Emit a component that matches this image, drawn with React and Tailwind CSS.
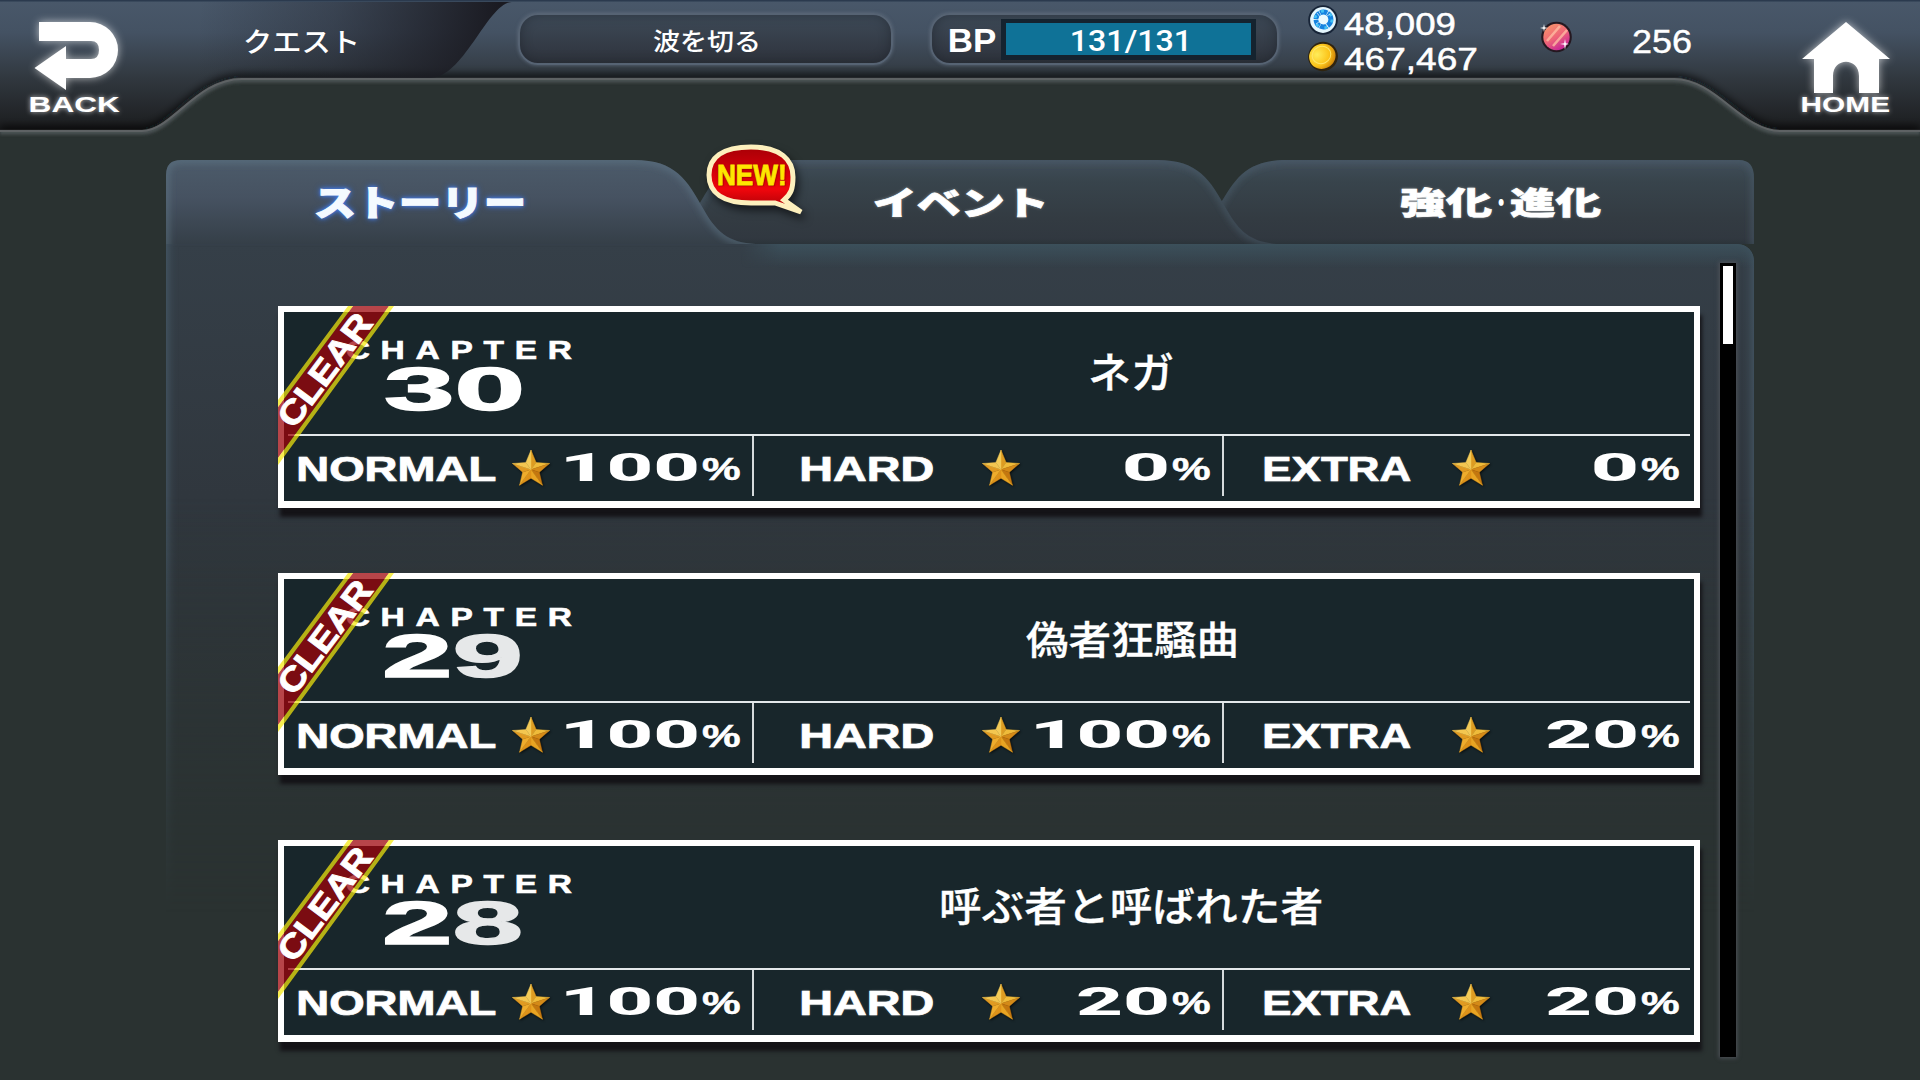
import { useLayoutEffect, useRef, useState } from "react";

const chapters = [
  { no: "30", title: "ネガ", titleBox: "w-[83px] h-[39px]", dim: "text-white", normal: "100", hard: "0", extra: "0" },
  { no: "29", title: "偽者狂騒曲", titleBox: "w-[210px] h-[39px]", dim: "text-[#e6e8e9]", normal: "100", hard: "100", extra: "20" },
  { no: "28", title: "呼ぶ者と呼ばれた者", titleBox: "w-[380px] h-[39px]", dim: "text-[#e6e8e9]", normal: "100", hard: "20", extra: "20" },
];

const digitWidth = { 1: "w-[43px]", 2: "w-[89px]", 3: "w-[131px]" };

const JP = "font-['Noto_Sans_CJK_JP',sans-serif]";
const SANS = "font-['Liberation_Sans',sans-serif]";
const ROBOTO = "font-['Roboto',sans-serif]";

// Stretches a line of text so its ink fills the box given by className
function FitText({ className = "", textClass = "", children }) {
  const box = useRef(null);
  const text = useRef(null);
  const [transform, setTransform] = useState("none");

  useLayoutEffect(() => {
    const style = getComputedStyle(text.current);
    const ctx = document.createElement("canvas").getContext("2d");
    ctx.font = style.font;
    if (style.letterSpacing !== "normal") ctx.letterSpacing = style.letterSpacing;
    const m = ctx.measureText(text.current.textContent);
    const spacing = parseFloat(style.letterSpacing) || 0;
    const size = parseFloat(style.fontSize);
    const asc = m.fontBoundingBoxAscent;
    const desc = m.fontBoundingBoxDescent;
    const baseline = (size - asc - desc) / 2 + asc;
    const left = -m.actualBoundingBoxLeft;
    const w = m.actualBoundingBoxRight + m.actualBoundingBoxLeft - (spacing > 0 && m.actualBoundingBoxRight >= m.width ? spacing : 0);
    const h = m.actualBoundingBoxAscent + m.actualBoundingBoxDescent;
    const sx = box.current.offsetWidth / w;
    const sy = box.current.offsetHeight / h;
    setTransform(`scale(${sx}, ${sy}) translate(${-left}px, ${-(baseline - m.actualBoundingBoxAscent)}px)`);
  }, []);

  return (
    <span ref={box} className={`block shrink-0 ${className}`}>
      <span ref={text} className={`block w-max whitespace-nowrap leading-none origin-top-left ${textClass}`} style={{ transform }}>
        {children}
      </span>
    </span>
  );
}

function HeaderBackdrop() {
  const edge = "M0,130 H142 C172,130 196,78 242,78 H1674 C1716,78 1742,130 1780,130 H1920";
  return (
    <svg className="absolute inset-0" width="1920" height="140" viewBox="0 0 1920 140" fill="none">
      <defs>
        <linearGradient id="bar" x1="0" y1="0" x2="0" y2="130" gradientUnits="userSpaceOnUse">
          <stop offset="0" stopColor="#49586a" />
          <stop offset=".25" stopColor="#445263" />
          <stop offset=".6" stopColor="#31383f" />
          <stop offset="1" stopColor="#1b1c1e" />
        </linearGradient>
        <linearGradient id="nameTab" x1="200" y1="0" x2="500" y2="20" gradientUnits="userSpaceOnUse">
          <stop offset="0" stopColor="#1e1f27" stopOpacity="0" />
          <stop offset=".45" stopColor="#1e1f27" stopOpacity=".35" />
          <stop offset="1" stopColor="#1a1a21" stopOpacity="1" />
        </linearGradient>
        <clipPath id="barClip">
          <path d={`${edge} V0 H0 Z`} />
        </clipPath>
        <filter id="soft" x="-5%" y="-50%" width="110%" height="200%">
          <feGaussianBlur stdDeviation="4" />
        </filter>
        <filter id="rim" x="-5%" y="-50%" width="110%" height="200%">
          <feGaussianBlur stdDeviation="1.4" />
        </filter>
      </defs>
      <path d={edge} transform="translate(0 2)" stroke="#4c5354" strokeWidth="5" filter="url(#rim)" />
      <path d={`${edge} V0 H0 Z`} fill="url(#bar)" />
      <g clipPath="url(#barClip)">
        <path d={edge} stroke="#08090a" strokeOpacity=".85" strokeWidth="7" filter="url(#soft)" />
        <path d="M180,2 H512 C488,2 464,78 430,78 H180 Z" fill="url(#nameTab)" />
      </g>
      <path d={edge} transform="translate(0 1)" stroke="#5e6264" strokeWidth="2" />
      <rect width="1920" height="1.5" fill="#2b3a4e" />
    </svg>
  );
}

function BackIcon() {
  return (
    <svg className="ml-1 overflow-visible drop-shadow-[0_0_4px_rgba(255,255,255,.65)]" width="85" height="69" viewBox="0 0 85 69">
      <path d="M5 0H56A28 28 0 0 1 56 56H32V68L.5 46L32 24V37H57Q65 37 65 28Q65 19 57 19H5Z" fill="#fff" />
    </svg>
  );
}

function HomeIcon() {
  return (
    <svg className="overflow-visible drop-shadow-[0_0_4px_rgba(255,255,255,.65)]" width="88" height="71" viewBox="0 0 88 71">
      <path d="M44 0L88 37H77V71H57V54C57 35 31 35 31 54V71H12V37H0Z" fill="#fff" />
    </svg>
  );
}

function BlueGem() {
  return (
    <svg width="30" height="30" viewBox="0 0 30 30">
      <circle cx="15" cy="15" r="14.8" fill="#172437" />
      <circle cx="15" cy="15" r="12.9" fill="#e4f6fd" />
      <circle cx="15.5" cy="14.5" r="7.4" fill="none" stroke="#1583e0" strokeWidth="5" strokeDasharray="7.2 .6" />
      <circle cx="15.5" cy="14.5" r="8.4" fill="none" stroke="#43c2f5" strokeWidth="2.6" strokeDasharray="3 6.2" />
      <path d="M9 8L20 22M22 9L8 19" stroke="#fff" strokeWidth=".8" strokeOpacity=".8" />
      <circle cx="15" cy="14.5" r="4.6" fill="#eafaff" />
    </svg>
  );
}

function Coin() {
  return (
    <svg width="30" height="31" viewBox="0 0 30 31">
      <defs>
        <radialGradient id="coin" cx=".35" cy=".35" r=".75">
          <stop offset="0" stopColor="#ffec5a" />
          <stop offset=".6" stopColor="#fcc41a" />
          <stop offset="1" stopColor="#c97c08" />
        </radialGradient>
      </defs>
      <ellipse cx="15" cy="15.5" rx="15" ry="14.5" fill="#30240f" transform="rotate(-25 15 15.5)" />
      <ellipse cx="14.5" cy="15" rx="13.4" ry="12.4" fill="url(#coin)" transform="rotate(-25 15 15.5)" />
      <ellipse cx="13.5" cy="14" rx="9.5" ry="8.5" fill="none" stroke="#ffe66a" transform="rotate(-25 13.5 14)" />
    </svg>
  );
}

function PinkGem() {
  return (
    <svg className="overflow-visible" width="32" height="32" viewBox="0 0 32 32">
      <defs>
        <linearGradient id="pink" x1=".2" y1="0" x2=".8" y2="1">
          <stop offset="0" stopColor="#f8956a" />
          <stop offset=".5" stopColor="#ee6478" />
          <stop offset="1" stopColor="#c01a9c" />
        </linearGradient>
      </defs>
      <circle cx="16.5" cy="16" r="15.3" fill="#251820" />
      <circle cx="16.5" cy="16" r="13.2" fill="url(#pink)" />
      <path d="M7 20L20 5M13 25L27 9" stroke="#ffc0a4" strokeWidth="2.6" strokeOpacity=".75" />
      <path d="M4 3L4.7 6.3L8 7L4.7 7.7L4 11L3.3 7.7L0 7L3.3 6.3ZM25 18L25.8 22.2L29 23L25.8 23.8L25 29L24.2 23.8L20 23L24.2 22.2Z" fill="#fff" />
    </svg>
  );
}

const PILL =
  "mt-[13px] h-[52px] rounded-[20px] border-2 border-[#566373] bg-gradient-to-b from-[#3e4a58] to-[#2e333c] shadow-[0_0_3px_1px_rgba(98,112,128,.55),inset_0_0_12px_rgba(20,24,32,.45)] flex";

function Header() {
  return (
    <header className="relative h-[132px]">
      <HeaderBackdrop />
      <div className="relative flex items-start text-white">
        <button className="flex flex-col gap-[6px] w-[121px] pl-[30px] pt-[22px]">
          <BackIcon />
          <FitText className="w-[90px] h-[15px]" textClass={`${SANS} text-[22px] font-bold [text-shadow:0_0_4px_rgba(255,255,255,.7)]`}>BACK</FitText>
        </button>
        <FitText className="ml-[124px] mt-[29px] w-[111px] h-[25px]" textClass={`${JP} text-[29px] font-medium`}>クエスト</FitText>

        <div className={`${PILL} ml-[162px] w-[375px] justify-center`}>
          <FitText className="mt-[14px] w-[105px] h-[24px]" textClass={`${JP} text-[26px] font-medium`}>波を切る</FitText>
        </div>

        <div className={`${PILL} ml-[37px] w-[349px] pl-[18px]`}>
          <FitText className="mt-[14px] w-[46px] h-[23px]" textClass={`${SANS} text-[32px] font-bold`}>BP</FitText>
          <div className="mt-[4px] ml-[5px] w-[255px] h-[41px] border-[5px] border-[#15232f] border-t-4 bg-[#0f7297] flex justify-center">
            <FitText className="mt-[7px] w-[114px] h-[23px]" textClass={`${ROBOTO} text-[29px] font-medium`}>131/131</FitText>
          </div>
        </div>

        <div className="ml-[29px] w-[170px] pt-[5px]">
          <div className="flex h-[36px]">
            <BlueGem />
            <FitText className="ml-[6px] mt-[10px] w-[111px] h-[25px]" textClass={`${SANS} text-[30px] [-webkit-text-stroke:.5px_white]`}>48,009</FitText>
          </div>
          <div className="flex">
            <Coin />
            <FitText className="ml-[6px] mt-[9px] w-[133px] h-[25px]" textClass={`${SANS} text-[30px] [-webkit-text-stroke:.5px_white]`}>467,467</FitText>
          </div>
        </div>

        <div className="ml-[62px] mt-[21px]">
          <PinkGem />
        </div>
        <FitText className="ml-[61px] mt-[30px] w-[58px] h-[23px]" textClass={`${SANS} text-[32px] [-webkit-text-stroke:.4px_white]`}>256</FitText>

        <button className="flex flex-col gap-[4px] ml-[111px] pt-[22px]">
          <HomeIcon />
          <FitText className="w-[88px] h-[15px]" textClass={`${SANS} text-[21px] font-bold [text-shadow:0_0_4px_rgba(255,255,255,.7)]`}>HOME</FitText>
        </button>
      </div>
    </header>
  );
}

function NewBadge() {
  return (
    <div className="absolute left-[539px] -top-[17px] w-[104px] h-[76px] z-40">
      <svg className="absolute inset-0 overflow-visible drop-shadow-[3px_5px_4px_rgba(0,0,0,.6)]" width="104" height="76" viewBox="0 0 104 76">
        <defs>
          <linearGradient id="badge" x1="0" y1="0" x2="0" y2="1">
            <stop offset="0" stopColor="#a80006" />
            <stop offset=".35" stopColor="#d0000a" />
            <stop offset=".65" stopColor="#f0060c" />
            <stop offset="1" stopColor="#a00006" />
          </linearGradient>
        </defs>
        <path
          d="M46 4C76 4 88 17 88 34C88 46 86 51 79 57L96 69L70 60C62 60 60 60 46 60C18 60 4 50 4 32C4 15 17 4 46 4Z"
          fill="url(#badge)" stroke="#fdf0bd" strokeWidth="5" strokeLinejoin="miter" strokeMiterlimit="6"
        />
      </svg>
      <FitText className="relative ml-[13px] mt-[22px] w-[67px] h-[20px]" textClass={`${SANS} text-[26px] font-bold text-[#ffe600] [-webkit-text-stroke:.8px_#ffe600] [text-shadow:0_0_2px_#7a0000,1px_1px_1px_#7a0000]`}>NEW!</FitText>
    </div>
  );
}

const TAB_OFF_TEXT = "font-black [-webkit-text-stroke:.8px_white] [text-shadow:0_0_3px_rgba(255,255,255,.5)]";

function Tabs() {
  return (
    <nav className="relative flex h-[84px] text-white">
      <button className="relative z-30 w-[595px]">
        <svg className="absolute inset-0" width="595" height="84" viewBox="0 0 595 84" fill="none">
          <defs>
            <linearGradient id="tabOn" x1="0" y1="0" x2="0" y2="84" gradientUnits="userSpaceOnUse">
              <stop offset="0" stopColor="#4c5b6a" />
              <stop offset=".45" stopColor="#465261" />
              <stop offset="1" stopColor="#353f48" />
            </linearGradient>
            <linearGradient id="tabOff" x1="0" y1="0" x2="0" y2="84" gradientUnits="userSpaceOnUse">
              <stop offset="0" stopColor="#414e5a" />
              <stop offset=".25" stopColor="#38444c" />
              <stop offset=".7" stopColor="#333b42" />
              <stop offset=".93" stopColor="#313840" />
              <stop offset="1" stopColor="#2b343a" />
            </linearGradient>
            <filter id="glow" x="-5%" y="-20%" width="110%" height="140%">
              <feGaussianBlur stdDeviation="3" />
            </filter>
            <clipPath id="onClip">
              <path d="M0,84 V15 Q0,0 15,0 H468 C510,0 521,20 538,50 C552,75 566,84 595,84 Z" />
            </clipPath>
          </defs>
          <g clipPath="url(#onClip)">
            <rect width="595" height="84" fill="url(#tabOn)" />
            <path d="M0,110 V15 Q0,0 15,0 H468 C510,0 521,20 538,50 C552,75 566,84 595,84" stroke="#60788a" strokeOpacity=".5" strokeWidth="8" filter="url(#glow)" />
          </g>
        </svg>
        <FitText className="relative ml-[150px] mt-[3px] w-[207px] h-[31px]" textClass={`${JP} text-[38px] font-black text-[#f4faff] [-webkit-text-stroke:1px_#f4faff] [text-shadow:0_0_3px_#4f83e6,0_0_5px_#3f74dc,0_0_7px_#3f74dc]`}>ストーリー</FitText>
      </button>

      <button className="relative z-20 -ml-[122px] w-[645px]">
        <svg className="absolute inset-0" width="645" height="84" viewBox="0 0 645 84" fill="none">
          <clipPath id="offClip">
            <path d="M0,84 C29,84 43,75 57,50 C74,20 85,0 127,0 H518 C560,0 571,20 588,50 C602,75 616,84 645,84 Z" />
          </clipPath>
          <g clipPath="url(#offClip)">
            <rect width="645" height="84" fill="url(#tabOff)" />
            <path d="M0,84 C29,84 43,75 57,50 C74,20 85,0 127,0 H518 C560,0 571,20 588,50 C602,75 616,84 645,84" stroke="#506474" strokeOpacity=".5" strokeWidth="7" filter="url(#glow)" />
          </g>
        </svg>
        <FitText className="relative ml-[235px] w-[170px] h-[29px]" textClass={`${JP} text-[36px] ${TAB_OFF_TEXT}`}>イベント</FitText>
      </button>

      <button className="relative z-10 -ml-[124px] w-[594px]">
        <svg className="absolute inset-0" width="594" height="84" viewBox="0 0 594 84" fill="none">
          <clipPath id="lastClip">
            <path d="M0,84 C29,84 43,75 57,50 C74,20 85,0 127,0 H579 Q594,0 594,18 V84 Z" />
          </clipPath>
          <g clipPath="url(#lastClip)">
            <rect width="594" height="84" fill="url(#tabOff)" />
            <path d="M0,84 C29,84 43,75 57,50 C74,20 85,0 127,0 H579 Q594,0 594,18 V100" stroke="#506474" strokeOpacity=".5" strokeWidth="7" filter="url(#glow)" />
          </g>
        </svg>
        <span className="relative flex items-center ml-[241px]">
          <FitText className="w-[91px] h-[31px]" textClass={`${JP} text-[38px] ${TAB_OFF_TEXT}`}>強化</FitText>
          <FitText className="mx-[6px] w-[6px] h-[7px]" textClass={`${JP} text-[35px] font-black`}>·</FitText>
          <FitText className="w-[91px] h-[31px]" textClass={`${JP} text-[38px] ${TAB_OFF_TEXT}`}>進化</FitText>
        </span>
      </button>
      <NewBadge />
    </nav>
  );
}

function Star() {
  const pts = Array.from({ length: 10 }, (_, i) => {
    const r = i % 2 ? 8.8 : 19.5;
    const a = (Math.PI / 5) * i - Math.PI / 2;
    return [20 + r * Math.cos(a), 20.5 + r * Math.sin(a)];
  });
  const shades = ["#dd9c22", "#efbb3a", "#d48a18", "#c4770f", "#e9a422", "#de9219", "#efac2c", "#e09a22", "#f3c650", "#f3cb58"];
  return (
    <svg className="overflow-visible drop-shadow-[1px_1px_1px_rgba(0,0,0,.7)]" width="40" height="40" viewBox="0 0 40 40">
      {pts.map((p, i) => {
        const n = pts[(i + 1) % 10];
        return <path key={i} d={`M20 20.5L${p[0]} ${p[1]}L${n[0]} ${n[1]}Z`} fill={shades[i]} stroke={shades[i]} strokeWidth=".4" />;
      })}
    </svg>
  );
}

function Stat({ label, labelBox, value, last }) {
  return (
    <div className={`flex w-[470px] h-[60px] ${last ? "" : "border-r-2 border-[#d5dadc]"}`}>
      <div className="w-[227px] pt-[21px] flex justify-center">
        <FitText className={`${labelBox} h-[24px]`} textClass={`${SANS} text-[33px] font-bold [-webkit-text-stroke:.7px_white] [text-shadow:0_0_2px_rgba(255,255,255,.35)]`}>{label}</FitText>
      </div>
      <div className="pt-[13px]">
        <Star />
      </div>
      <div className={`flex-1 flex justify-end pt-[17px] gap-[5px] ${last ? "pr-[15px]" : "pr-[12px]"}`}>
        <FitText className={`${digitWidth[value.length]} h-[28px]`} textClass={`${ROBOTO} text-[39px] font-extrabold`}>{value}</FitText>
        <FitText className="mt-[5px] w-[38px] h-[22px]" textClass={`${SANS} text-[32px] font-bold [-webkit-text-stroke:.5px_white]`}>%</FitText>
      </div>
    </div>
  );
}

function ClearRibbon() {
  return (
    <div className="absolute -left-[6px] -top-[6px] w-[120px] h-[162px]">
      <svg className="absolute inset-0" width="120" height="162" viewBox="0 0 120 162">
        <path d="M75 0H111L0 152V101Z" fill="#9e0409" fillOpacity=".74" />
        <path d="M70 0H75L0 101V94ZM111 0H116L0 159V152Z" fill="#f4e80c" fillOpacity=".72" />
      </svg>
      <FitText className="absolute left-[-19px] top-[52px] w-[132px] h-[23px] -rotate-53" textClass={`${SANS} text-[32px] font-bold [-webkit-text-stroke:.8px_white]`}>CLEAR</FitText>
    </div>
  );
}

function ChapterCard({ chapter }) {
  return (
    <article className="relative w-[1422px] h-[202px] border-[6px] border-b-[7px] border-white bg-[#18262b] text-white shadow-[2px_9px_4px_#141317]">
      <div className="flex h-[122px]">
        <div className="w-[426px] pl-[63px] pt-[29px]">
          <FitText className="w-[225px] h-[18px]" textClass={`${SANS} text-[25px] font-bold tracking-[8px] [-webkit-text-stroke:.6px_white]`}>CHAPTER</FitText>
          <FitText className="ml-[39px] mt-[8px] w-[134px] h-[44px]" textClass={`${SANS} text-[62px] font-bold [-webkit-text-stroke:1.4px_currentColor]`}>
            {chapter.no[0]}<span className={chapter.dim}>{chapter.no[1]}</span>
          </FitText>
        </div>
        <div className="w-[842px] pt-[41px] flex justify-center">
          <FitText className={chapter.titleBox} textClass={`${JP} text-[41px] font-medium [-webkit-text-stroke:.3px_white]`}>{chapter.title}</FitText>
        </div>
      </div>
      <div className="mx-[4px] h-[2px] bg-[#e3e8ea]" />
      <div className="flex">
        <Stat label="NORMAL" labelBox="w-[197px]" value={chapter.normal} />
        <Stat label="HARD" labelBox="w-[131px]" value={chapter.hard} />
        <Stat label="EXTRA" labelBox="w-[145px]" value={chapter.extra} last />
      </div>
      <ClearRibbon />
    </article>
  );
}

export default function App() {
  return (
    <div className="w-[1920px] h-[1080px] overflow-hidden bg-[#2a3231]">
      <Header />
      <main className="mt-[28px] ml-[166px] w-[1588px]">
        <Tabs />
        <section className="relative flex h-[836px]">
          {/* panel surface, fading into the page */}
          <div className="absolute inset-0 rounded-tr-[16px] bg-gradient-to-b from-[#353f48] via-[#30373e] via-30% to-[#2d3437] to-70% shadow-[inset_10px_0_10px_-8px_#465a68,inset_-10px_0_10px_-8px_#465a68] [mask-image:linear-gradient(to_bottom,#000_30%,transparent_80%)]" />
          <div className="absolute left-[575px] right-0 top-0 h-[24px] rounded-tr-[16px] bg-gradient-to-b from-[#3c505b] to-transparent [mask-image:linear-gradient(to_right,transparent,#000_40px)]" />
          <div className="relative flex flex-col gap-[65px] pl-[112px] pt-[62px]">
            {chapters.map((c) => (
              <ChapterCard key={c.no} chapter={c} />
            ))}
          </div>
          <div className="relative ml-[20px] mt-[19px] w-[16px] h-[794px] bg-black p-[3px] shadow-[0_0_4px_1px_#50535a]">
            <div className="w-[10px] h-[78px] bg-white" />
          </div>
        </section>
      </main>
    </div>
  );
}
